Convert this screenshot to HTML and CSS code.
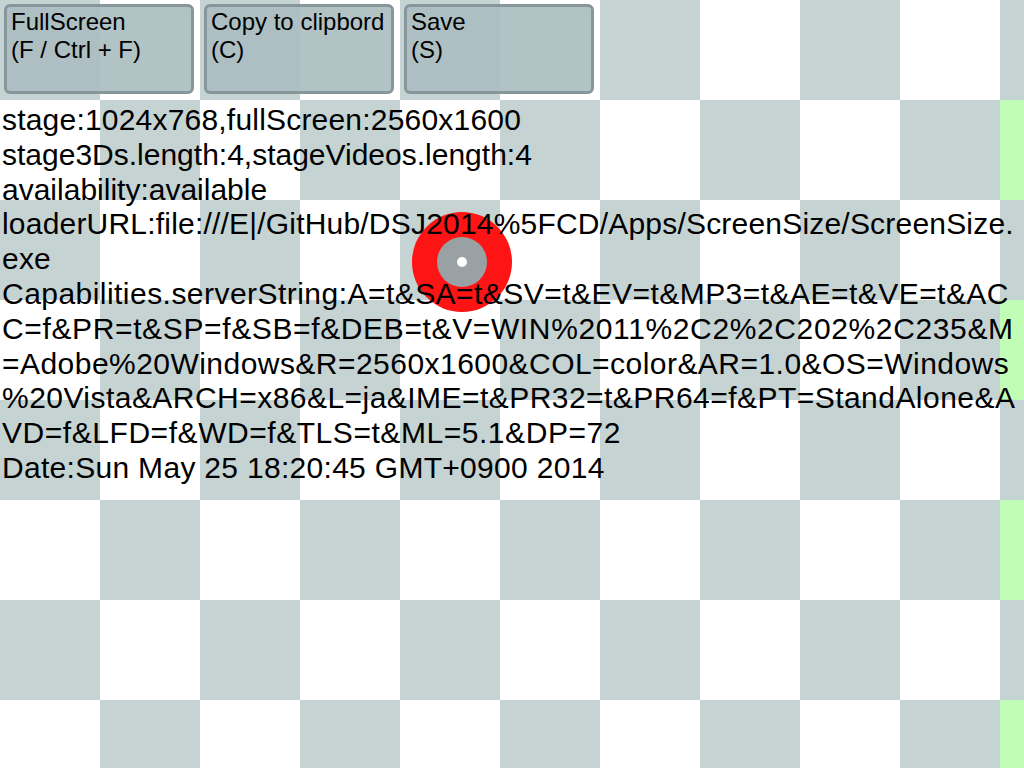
FILE: index.html
```html
<!DOCTYPE html>
<html>
<head>
<meta charset="utf-8">
<link rel="stylesheet" href="styles.css">
</head>
<body>
<div class="toolbar">
  <div class="btn">FullScreen<br>(F / Ctrl + F)</div>
  <div class="btn">Copy to clipbord<br>(C)</div>
  <div class="btn">Save<br>(S)</div>
</div>
<div class="target"><div class="target-inner"><div class="target-dot"></div></div></div>
<div class="info">
  <div class="line">stage:1024x768,fullScreen:2560x1600</div>
  <div class="line tight">stage3Ds.length:4,stageVideos.length:4</div>
  <div class="line tight">availability:available</div>
  <div class="line">loaderURL:file:///E|/GitHub/DSJ2014%5FCD/Apps/ScreenSize/ScreenSize.</div>
  <div class="line">exe</div>
  <div class="line wide">Capabilities.serverString:A=t&amp;SA=t&amp;SV=t&amp;EV=t&amp;MP3=t&amp;AE=t&amp;VE=t&amp;AC</div>
  <div class="line widest">C=f&amp;PR=t&amp;SP=f&amp;SB=f&amp;DEB=t&amp;V=WIN%2011%2C2%2C202%2C235&amp;M</div>
  <div class="line wide">=Adobe%20Windows&amp;R=2560x1600&amp;COL=color&amp;AR=1.0&amp;OS=Windows</div>
  <div class="line wide">%20Vista&amp;ARCH=x86&amp;L=ja&amp;IME=t&amp;PR32=t&amp;PR64=f&amp;PT=StandAlone&amp;A</div>
  <div class="line wider">VD=f&amp;LFD=f&amp;WD=f&amp;TLS=t&amp;ML=5.1&amp;DP=72</div>
  <div class="line loose">Date:Sun May 25 18:20:45 GMT+0900 2014</div>
</div>
</body>
</html>
```

FILE: styles.css
```css
html, body {
  margin: 0;
  padding: 0;
  width: 1024px;
  height: 768px;
  overflow: hidden;
}
body {
  font-family: "Liberation Sans", Arial, sans-serif;
  color: #000;
  background:
    linear-gradient(#c5d3d3 50%, #c1fdb5 50%) 1000px 0 / 24px 200px repeat-y,
    repeating-conic-gradient(#ffffff 0 25%, #c5d3d3 0 50%) 0 0 / 200px 200px;
  position: relative;
}
.toolbar {
  display: flex;
  gap: 10px;
  padding: 4px 4px 6px 4px;
  height: 90px;
  position: relative;
  z-index: 2;
}
.btn {
  box-sizing: border-box;
  width: 190px;
  height: 90px;
  border: 3px solid #86969b;
  border-radius: 6px;
  background: rgba(170, 188, 192, 0.9);
  font-size: 24px;
  line-height: 28px;
  padding: 1px 4px;
  color: #000;
}
.target {
  position: absolute;
  left: 412px;
  top: 212px;
  width: 100px;
  height: 100px;
  border-radius: 50%;
  background: #fe1414;
  display: flex;
  align-items: center;
  justify-content: center;
}
.target-inner {
  width: 50px;
  height: 50px;
  border-radius: 50%;
  background: #9aa1a5;
  display: flex;
  align-items: center;
  justify-content: center;
}
.target-dot {
  width: 10px;
  height: 10px;
  border-radius: 50%;
  background: #fff;
}
.info {
  position: relative;
  z-index: 1;
  padding: 3px 0 0 2px;
  font-size: 30px;
  line-height: 34.8px;
}
.line {
  white-space: nowrap;
  letter-spacing: 0.2px;
}
.line.tight { letter-spacing: 0; }
.line.loose { letter-spacing: 0.3px; }
.line.wide { letter-spacing: 0.46px; }
.line.wider { letter-spacing: 0.55px; }
.line.widest { letter-spacing: 0.63px; }
```
